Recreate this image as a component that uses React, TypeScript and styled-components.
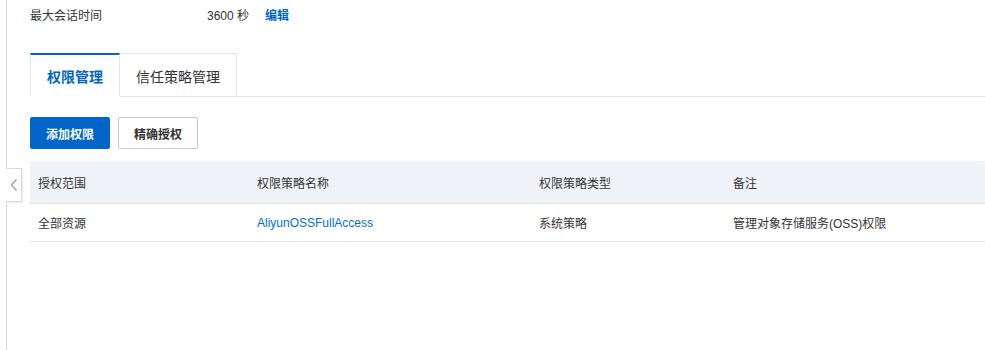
import styled, { createGlobalStyle } from "styled-components";

const GlobalStyle = createGlobalStyle`
  html, body {
    margin: 0;
    padding: 0;
    background: #fff;
    overflow: hidden;
  }
  body {
    font-family: "Liberation Sans", "Noto Sans CJK SC", sans-serif;
    font-size: 12px;
    color: #333;
  }
`;

const columns = ["授权范围", "权限策略名称", "权限策略类型", "备注"];

const rows = [
  {
    scope: "全部资源",
    name: "AliyunOSSFullAccess",
    type: "系统策略",
    remark: "管理对象存储服务(OSS)权限",
  },
];

export default function App() {
  return (
    <>
      <GlobalStyle />
      <Page>
        <SideLine>
          <CollapseButton>
            <svg width="8" height="14" viewBox="0 0 8 14">
              <path d="M6.5 1.5L1.5 7l5 5.5" fill="none" stroke="#9a9a9a" strokeWidth="1.2" />
            </svg>
          </CollapseButton>
        </SideLine>
        <Content>
          <InfoRow>
            <InfoLabel>最大会话时间</InfoLabel>
            <InfoValue>3600 秒</InfoValue>
            <EditLink>编辑</EditLink>
          </InfoRow>

          <Tabs>
            <Tab $active>权限管理</Tab>
            <Tab>信任策略管理</Tab>
            <TabRest />
          </Tabs>

          <Toolbar>
            <Button $primary>添加权限</Button>
            <Button>精确授权</Button>
          </Toolbar>

          <Table>
            <HeadRow>
              {columns.map((c) => (
                <Cell key={c}>{c}</Cell>
              ))}
            </HeadRow>
            {rows.map((r) => (
              <BodyRow key={r.name}>
                <Cell>{r.scope}</Cell>
                <Cell>
                  <PolicyLink>{r.name}</PolicyLink>
                </Cell>
                <Cell>{r.type}</Cell>
                <Cell>{r.remark}</Cell>
              </BodyRow>
            ))}
          </Table>
        </Content>
      </Page>
    </>
  );
}

const Page = styled.div`
  display: flex;
  width: 985px;
  height: 350px;
  padding-left: 6px;
  box-sizing: border-box;
`;

const SideLine = styled.div`
  position: relative;
  width: 1px;
  background: #d4d4d4;
  flex-shrink: 0;
`;

const CollapseButton = styled.div`
  position: absolute;
  left: 0;
  top: 168px;
  width: 16px;
  height: 34px;
  box-sizing: border-box;
  background: #fff;
  border: 1px solid #d9d9d9;
  border-left: none;
  box-shadow: 1px 1px 2px rgba(0, 0, 0, 0.08);
  display: flex;
  align-items: center;
  justify-content: center;
`;

const Content = styled.div`
  flex: 1;
  padding-left: 23px;
  display: flex;
  flex-direction: column;
`;

const InfoRow = styled.div`
  display: flex;
  align-items: center;
  height: 20px;
  margin-top: 4px;
`;

const InfoLabel = styled.span`
  width: 177px;
`;

const InfoValue = styled.span`
  margin-right: 16px;
`;

const EditLink = styled.a`
  color: #0064c8;
  font-weight: bold;
  cursor: pointer;
`;

const Tabs = styled.div`
  display: flex;
  margin-top: 29px;
  height: 44px;
`;

const Tab = styled.div<{ $active?: boolean }>`
  display: flex;
  align-items: center;
  padding: 0 16px;
  font-size: 14px;
  box-sizing: border-box;
  border: 1px solid #e3e3e3;
  border-left: ${(p) => (p.$active ? "1px solid #e3e3e3" : "none")};
  border-top: ${(p) => (p.$active ? "2px solid #0064c8" : "1px solid #e3e3e3")};
  border-bottom: ${(p) => (p.$active ? "1px solid transparent" : "1px solid #e3e3e3")};
  color: ${(p) => (p.$active ? "#0064c8" : "#333")};
  font-weight: ${(p) => (p.$active ? "bold" : "normal")};
  padding-top: ${(p) => (p.$active ? "0" : "1px")};
`;

const TabRest = styled.div`
  flex: 1;
  border-bottom: 1px solid #e3e3e3;
`;

const Toolbar = styled.div`
  display: flex;
  gap: 8px;
  margin-top: 20px;
`;

const Button = styled.button<{ $primary?: boolean }>`
  height: 32px;
  padding: 0 15px;
  font-family: inherit;
  font-size: 12px;
  font-weight: bold;
  border-radius: 2px;
  cursor: pointer;
  border: 1px solid ${(p) => (p.$primary ? "#0064c8" : "#c8c8c8")};
  background: ${(p) => (p.$primary ? "#0064c8" : "#fff")};
  color: ${(p) => (p.$primary ? "#fff" : "#333")};
`;

const Table = styled.div`
  margin-top: 12px;
  display: flex;
  flex-direction: column;
`;

const HeadRow = styled.div`
  display: grid;
  grid-template-columns: 219px 282px 194px 1fr;
  height: 43px;
  box-sizing: border-box;
  align-items: center;
  background: #eff3f8;
  border-bottom: 1px solid #e3e3e3;
`;

const BodyRow = styled.div`
  display: grid;
  grid-template-columns: 219px 282px 194px 1fr;
  height: 38px;
  box-sizing: border-box;
  align-items: center;
  border-bottom: 1px solid #e3e3e3;
`;

const Cell = styled.div`
  padding: 0 8px;
  white-space: nowrap;
`;

const PolicyLink = styled.a`
  color: #0070cc;
  cursor: pointer;
`;
